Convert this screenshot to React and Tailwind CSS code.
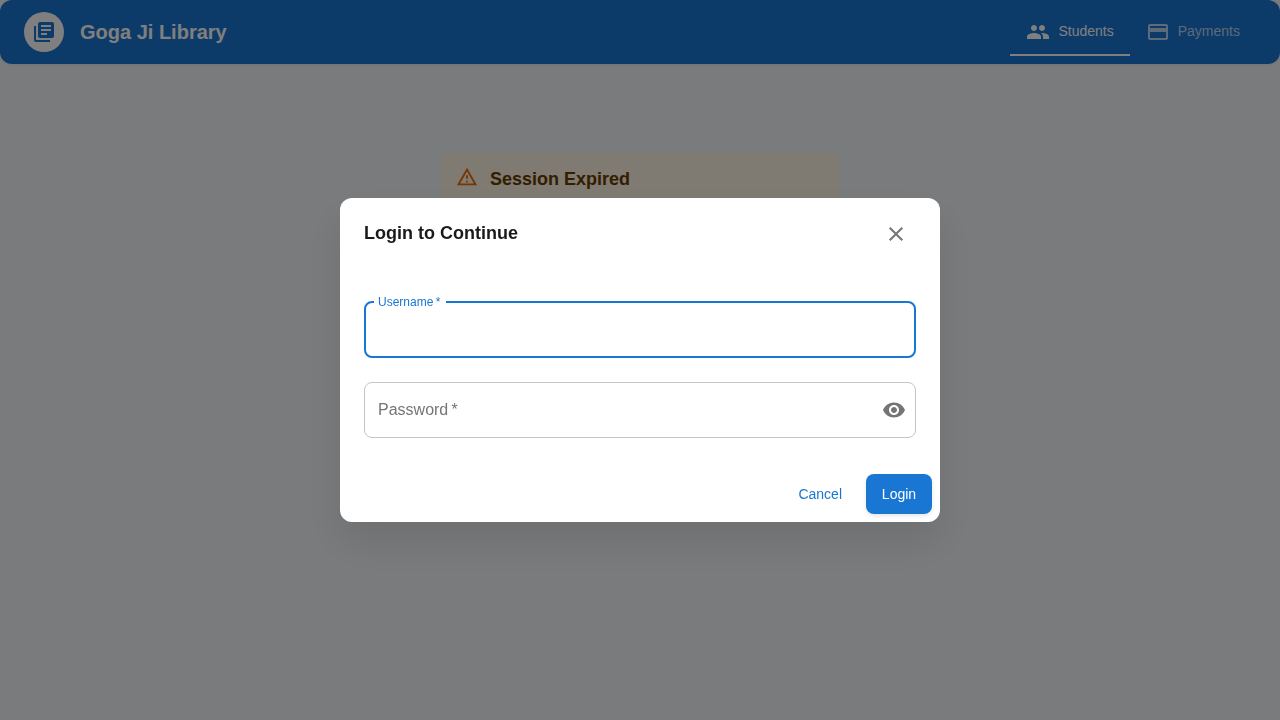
import { useState } from "react";

function Icon({ className = "", children }) {
  return (
    <svg viewBox="0 0 24 24" fill="currentColor" aria-hidden="true" className={`shrink-0 ${className}`}>
      {children}
    </svg>
  );
}

function Header() {
  return (
    <header className="flex h-16 items-center rounded-xl bg-[#1976d2] px-6 text-white shadow-[0_1px_3px_rgba(0,0,0,0.08)]">
      <div className="flex size-10 items-center justify-center rounded-full bg-white text-[#1976d2]">
        <Icon className="size-6">
          <path d="M4 6H2v14c0 1.100.9 2 2 2h14v-2H4z" />
          <path d="M20 2H8c-1.100 0-2 .9-2 2v12c0 1.100.9 2 2 2h12c1.100 0 2-.9 2-2V4c0-1.100-.9-2-2-2m-1 9H9V9h10zm-4 4H9v-2h6zm4-8H9V5h10z" />
        </Icon>
      </div>
      <h1 className="ml-4 text-xl font-bold">Goga Ji Library</h1>
      <nav className="ml-auto flex h-12 text-sm font-medium">
        <a className="flex items-center gap-2 border-b-2 border-white px-4">
          <Icon className="mt-0.5 size-6">
            <path d="M16 11c1.660 0 2.990-1.340 2.990-3S17.660 5 16 5s-3 1.340-3 3 1.340 3 3 3m-8 0c1.660 0 2.990-1.340 2.990-3S9.660 5 8 5 5 6.340 5 8s1.340 3 3 3m0 2c-2.330 0-7 1.170-7 3.500V19h14v-2.500c0-2.330-4.670-3.500-7-3.500m8 0c-.29 0-.62.020-.97.050 1.160.84 1.970 1.970 1.970 3.450V19h6v-2.500c0-2.330-4.670-3.500-7-3.500" />
          </Icon>
          <span>Students</span>
        </a>
        <a className="flex items-center gap-2 border-b-2 border-transparent px-4 text-white/70">
          <Icon className="mt-0.5 size-6">
            <path d="M20 4H4c-1.110 0-1.990.89-1.990 2L2 18c0 1.110.89 2 2 2h16c1.110 0 2-.89 2-2V6c0-1.110-.89-2-2-2m0 14H4v-6h16zm0-10H4V6h16z" />
          </Icon>
          <span>Payments</span>
        </a>
      </nav>
    </header>
  );
}

function SessionAlert() {
  return (
    <section className="mx-auto mt-[89px] flex h-40 w-[400px] rounded-xl bg-[#fff4e5] px-4 py-1.5">
      <Icon className="mt-[7px] mr-3 size-[22px] text-[#ed6c02]">
        <path d="M12 5.990 19.530 19H4.470zM12 2 1 21h22zm1 14h-2v2h2zm0-6h-2v4h2z" />
      </Icon>
      <h2 className="mt-1.5 text-lg leading-7 font-bold text-[#663c00]">Session Expired</h2>
    </section>
  );
}

function LoginDialog() {
  const [visible, setVisible] = useState(false);
  return (
    <div className="fixed inset-0 flex items-center justify-center bg-black/50">
      <form
        role="dialog"
        className="flex h-[324px] w-[600px] flex-col rounded-xl bg-white shadow-[0_20px_40px_rgba(0,0,0,0.1)]"
        onSubmit={(event) => event.preventDefault()}
      >
        <div className="flex h-[72px] items-center justify-between pr-8 pl-6">
          <h2 className="-mt-0.5 text-lg font-bold text-[#1a1a1a]">Login to Continue</h2>
          <button type="button" aria-label="Close" className="flex size-6 items-center justify-center text-[#757575]">
            <Icon className="size-6">
              <path d="M19 6.410 17.590 5 12 10.590 6.410 5 5 6.410 10.590 12 5 17.590 6.410 19 12 13.410 17.590 19 19 17.590 13.410 12z" />
            </Icon>
          </button>
        </div>
        <div className="flex flex-col gap-6 px-6 pt-[26px]">
          <fieldset className="h-[62px] rounded-lg border-2 border-[#1976d2] px-2">
            <legend className="h-[11px] w-[72px] pl-1 text-xs leading-[13px] whitespace-nowrap text-[#1976d2]">
              Username&thinsp;*
            </legend>
            <input aria-label="Username" className="h-12 w-full px-1.5 text-base outline-none" />
          </fieldset>
          <div className="flex h-14 items-center rounded-lg border border-[#c4c4c4] pr-[9px] pl-[13px]">
            <input
              aria-label="Password"
              type={visible ? "text" : "password"}
              placeholder={"Password\u2009*"}
              className="min-w-0 flex-1 text-base outline-none placeholder:text-[#757575]"
            />
            <button
              type="button"
              aria-label="Toggle password visibility"
              className="text-[#757575]"
              onClick={() => setVisible(!visible)}
            >
              <Icon className="size-6">
                <path d="M12 4.500C7 4.500 2.730 7.610 1 12c1.730 4.390 6 7.500 11 7.500s9.270-3.110 11-7.500c-1.730-4.390-6-7.500-11-7.500M12 17c-2.760 0-5-2.240-5-5s2.240-5 5-5 5 2.240 5 5-2.240 5-5 5m0-8c-1.660 0-3 1.340-3 3s1.340 3 3 3 3-1.340 3-3-1.340-3-3-3" />
              </Icon>
            </button>
          </div>
        </div>
        <div className="mt-auto flex justify-end gap-2 p-2 text-sm font-medium">
          <button type="button" className="h-10 px-4 text-[#1976d2]">
            Cancel
          </button>
          <button
            type="submit"
            className="h-10 w-[66px] rounded-lg bg-[#1976d2] text-white shadow-[0_2px_4px_rgba(0,0,0,0.1)]"
          >
            Login
          </button>
        </div>
      </form>
    </div>
  );
}

export default function App() {
  return (
    <div className="h-screen overflow-hidden bg-[#f5f7fa] font-['Liberation_Sans',Arial,sans-serif]">
      <Header />
      <SessionAlert />
      <LoginDialog />
    </div>
  );
}
